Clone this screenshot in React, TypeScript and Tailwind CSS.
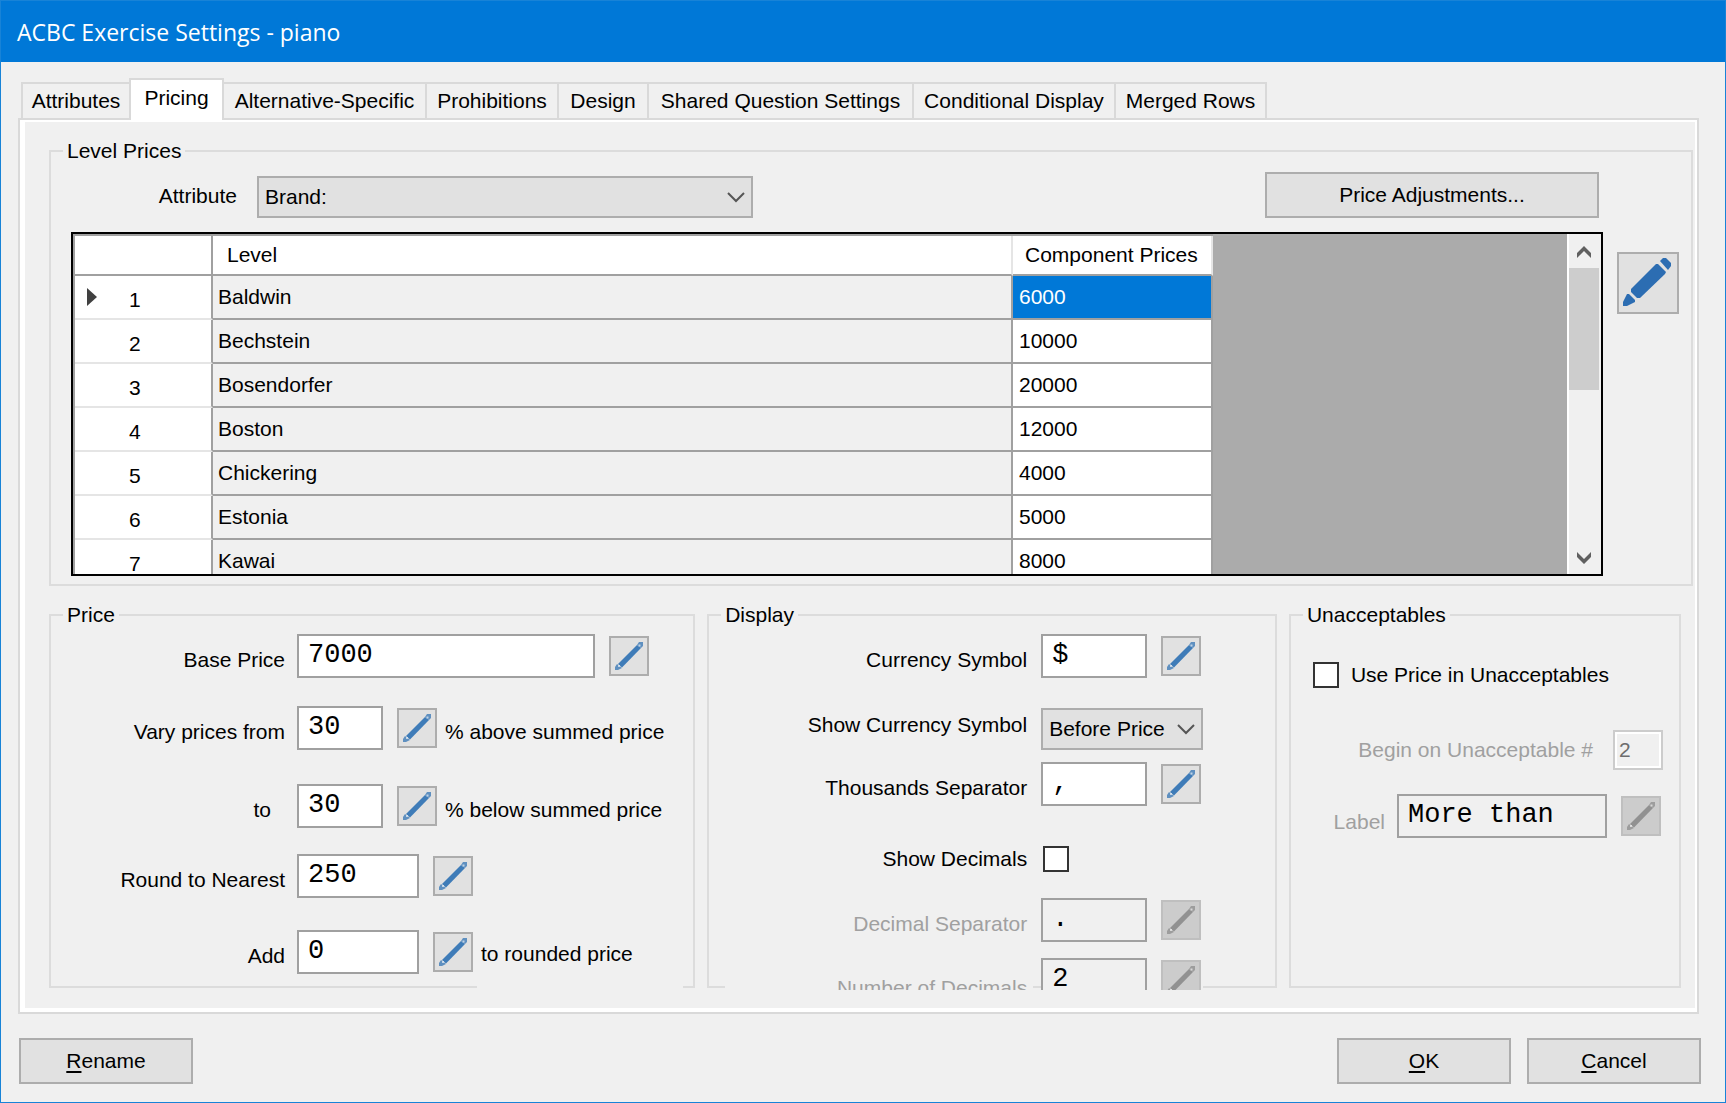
import type { ReactNode } from "react";

const LEVELS = [
  { name: "Baldwin", price: "6000" },
  { name: "Bechstein", price: "10000" },
  { name: "Bosendorfer", price: "20000" },
  { name: "Boston", price: "12000" },
  { name: "Chickering", price: "4000" },
  { name: "Estonia", price: "5000" },
  { name: "Kawai", price: "8000" },
];

const TABS = [
  { label: "Attributes", width: "w-[108px]" },
  { label: "Pricing", width: "w-[95px]" },
  { label: "Alternative-Specific", width: "w-[201px]" },
  { label: "Prohibitions", width: "w-[132px]" },
  { label: "Design", width: "w-[90px]" },
  { label: "Shared Question Settings", width: "w-[265px]" },
  { label: "Conditional Display", width: "w-[202px]" },
  { label: "Merged Rows", width: "w-[153px]" },
];

function PencilButton({ label, disabled = false, className = "" }: { label: string; disabled?: boolean; className?: string }) {
  return (
    <button
      type="button"
      aria-label={label}
      disabled={disabled}
      className={`size-10 shrink-0 border-2 ${
        disabled ? "border-[#bfbfbf] bg-[#cccccc] text-[#919191]" : "border-[#adadad] bg-[#e1e1e1] text-[#3f7cb8]"
      } ${className}`}
    >
      <svg viewBox="2 2 36 36" className="size-9" aria-hidden="true">
        <path d="M9 28 L28 9 L32 12 L13 31.500 Z" fill="currentColor" />
        <path d="M8 28 L13 32 L9 34 L6 34 L6 31 Z" fill="currentColor" opacity="0.8" />
        <path d="M28 9 L30 6 L34 6 L34 10 L32 12 Z" fill="currentColor" opacity="0.8" />
        <path d="M9 29 h2 v2 h-2 Z M29.500 8.500 h2 v2 h-2 Z" fill="#ffffff" opacity="0.6" />
      </svg>
    </button>
  );
}

function Chevron() {
  return (
    <svg viewBox="0 0 18 12" className="pointer-events-none absolute top-1/2 right-2 h-3 w-[18px] -translate-y-1/2" aria-hidden="true">
      <path d="M1 2 L9 10 L17 2" fill="none" stroke="#555555" strokeWidth="2" />
    </svg>
  );
}

function Group({ title, className = "", children }: { title: string; className?: string; children: ReactNode }) {
  return (
    <fieldset className={`min-w-0 border-2 border-[#dcdcdc] ${className}`}>
      <legend className="ml-3 px-1 leading-7">{title}</legend>
      {children}
    </fieldset>
  );
}

function MonoInput({ id, value, width, disabled = false }: { id: string; value: string; width: string; disabled?: boolean }) {
  return (
    <input
      id={id}
      defaultValue={value}
      readOnly={disabled}
      className={`h-11 shrink-0 border-2 border-[#a0a0a0] pb-[2px] pl-[9px] font-['Liberation_Mono',monospace] text-[27px] outline-none ${width} ${
        disabled ? "bg-[#f0f0f0]" : "bg-white"
      }`}
    />
  );
}

function PriceRow({ id, label, value, width, after, className = "", labelClass = "" }: {
  id: string;
  label: string;
  value: string;
  width: string;
  after?: ReactNode;
  className?: string;
  labelClass?: string;
}) {
  return (
    <div className={`flex h-11 items-center ${className}`}>
      <label htmlFor={id} className={`mr-3 w-[234px] shrink-0 pt-2 text-right ${labelClass}`}>{label}</label>
      <MonoInput id={id} value={value} width={width} />
      <PencilButton label={`Edit ${label}`} className="ml-[14px]" />
      {after}
    </div>
  );
}

function DisplayRow({ htmlFor, label, className = "", labelClass = "pt-2", children }: {
  htmlFor: string;
  label: string;
  className?: string;
  labelClass?: string;
  children: ReactNode;
}) {
  return (
    <div className={`flex items-center ${className}`}>
      <label htmlFor={htmlFor} className={`mr-[14px] w-[318px] shrink-0 text-right ${labelClass}`}>{label}</label>
      {children}
    </div>
  );
}

const CHECKBOX = "size-[26px] shrink-0 appearance-none border-2 border-[#333333] bg-white";
const PUSH_BUTTON = "h-[46px] border-2 border-[#adadad] bg-[#e1e1e1]";

export default function App() {
  return (
    <div className="flex min-h-screen flex-col border border-[#1883d7] bg-[#f0f0f0] font-['Liberation_Sans',sans-serif] text-[21px] leading-7 whitespace-nowrap text-black">
      <header className="flex h-[61px] items-center bg-[#0078d7] px-4 font-['Open_Sans',sans-serif] text-[23px] text-white">
        <h1>ACBC Exercise Settings - piano</h1>
      </header>

      <main className="flex grow flex-col px-[17px] pt-4">
        <div role="tablist" className="ml-[3px] flex items-end">
          {TABS.map((tab, i) =>
            i === 1 ? (
              <button key={tab.label} type="button" role="tab" aria-selected="true" className={`relative -mb-[2px] h-[42px] border-2 border-b-0 border-[#d9d9d9] bg-white pb-1 ${tab.width}`}>
                {tab.label}
              </button>
            ) : (
              <button
                key={tab.label}
                type="button"
                role="tab"
                aria-selected="false"
                className={`h-9 border-t-2 border-[#d9d9d9] ${i === 2 ? "" : "border-l-2"} ${i === TABS.length - 1 ? "border-r-2" : ""} ${tab.width}`}
              >
                {tab.label}
              </button>
            ),
          )}
        </div>

        <div role="tabpanel" className="mr-[9px] border-2 border-[#d9d9d9] bg-white pt-[2px] pr-[2px] pb-1 pl-[5px]">
          <div className="bg-[#f0f0f0] pt-[15px] pb-5 pl-6">
            <Group title="Level Prices" className="mr-[2px] pb-2">
              <div className="mt-[7px] flex items-end pr-[92px]">
                <label htmlFor="attribute" className="mr-5 w-[186px] pb-2 text-right">Attribute</label>
                <div className="relative w-[496px]">
                  <select id="attribute" className="h-[42px] w-full appearance-none border-2 border-[#adadad] bg-[#e1e1e1] pl-[6px]">
                    <option>Brand:</option>
                  </select>
                  <Chevron />
                </div>
                <button type="button" className={`ml-auto w-[334px] ${PUSH_BUTTON}`}>Price Adjustments...</button>
              </div>

              <div className="mt-[14px] flex items-start pl-5">
                <div className="flex h-[344px] grow overflow-hidden border-2 border-black bg-[#ababab]">
                  <table className="w-[1140px] table-fixed border-separate border-spacing-0 self-start border-t-2 border-l-2 border-[#a0a0a0] text-left">
                    <thead>
                      <tr className="h-10 bg-white">
                        <th className="w-[138px] border-r-2 border-b-2 border-[#a0a0a0] p-0" aria-label="Row" />
                        <th className="w-[800px] border-r-2 border-b-2 border-r-[#e5e5e5] border-b-[#a0a0a0] py-0 pr-0 pl-[14px] font-normal">Level</th>
                        <th className="border-r-2 border-b-2 border-r-[#e5e5e5] border-b-[#a0a0a0] py-0 pr-0 pl-3 font-normal">Component Prices</th>
                      </tr>
                    </thead>
                    <tbody>
                      {LEVELS.map((level, i) => (
                        <tr key={level.name} className="h-11">
                          <th className="border-r-2 border-b-2 border-r-[#a0a0a0] border-b-[#e5e5e5] bg-white p-0 font-normal">
                            <div className="flex items-center">
                              <span className="w-[54px] pl-3">
                                {i === 0 && (
                                  <svg viewBox="0 0 10 18" className="h-[18px] w-[10px]" aria-hidden="true">
                                    <path d="M0 0 L10 9 L0 18 Z" fill="#404040" />
                                  </svg>
                                )}
                              </span>
                              <span className="pt-[6px]">{i + 1}</span>
                            </div>
                          </th>
                          <td className="border-r-2 border-b-2 border-[#a0a0a0] bg-[#f0f0f0] py-0 pr-0 pl-[5px]">{level.name}</td>
                          <td className={`border-r-2 border-b-2 border-[#a0a0a0] py-0 pr-0 pl-[6px] ${i === 0 ? "bg-[#0078d7] text-white" : "bg-white"}`}>{level.price}</td>
                        </tr>
                      ))}
                    </tbody>
                  </table>
                  <div className="ml-auto flex w-[34px] shrink-0 flex-col items-center border-l-2 border-white bg-[#f0f0f0] pr-[2px]" aria-hidden="true">
                    <svg viewBox="0 0 14 12" className="mt-3 mb-[10px] h-3 w-[14px] shrink-0">
                      <path d="M0 12 V7 L7 0 L14 7 V12 L7 5 Z" fill="#606060" />
                    </svg>
                    <div className="h-[122px] w-[30px] bg-[#cdcdcd]" />
                    <svg viewBox="0 0 14 12" className="mt-auto mb-[10px] h-3 w-[14px] shrink-0">
                      <path d="M0 0 V5 L7 12 L14 5 V0 L7 7 Z" fill="#606060" />
                    </svg>
                  </div>
                </div>
                <button type="button" aria-label="Edit level prices" className="mt-5 mr-3 ml-[14px] size-[62px] shrink-0 border-2 border-[#adadad] bg-[#e1e1e1]">
                  <svg viewBox="2 2 58 58" className="size-[58px]" fill="#2c6db2" aria-hidden="true">
                    <path d="M14 37 L39 12 L41 12 L49 20 L48 22 L23 46 L20 46 L14 40 Z" />
                    <path d="M10 42 L12 42 L18 48 L18 50 L10 54 L6 54 L6 50 Z" />
                    <path d="M43 9 L46 6 L49 6 L54 11 L54 14 L51 18 Z" />
                  </svg>
                </button>
              </div>
            </Group>

            <div className="mt-[15px] mr-[14px] flex gap-3">
              <Group title="Price" className="flex-[647_0_0]">
                <PriceRow id="base" label="Base Price" value="7000" width="w-[298px]" className="mt-[5px]" />
                <PriceRow id="above" label="Vary prices from" value="30" width="w-[86px]" className="mt-7" after={<span className="ml-2 pt-2">% above summed price</span>} />
                <PriceRow id="below" label="to" value="30" width="w-[86px]" className="mt-[34px]" labelClass="pr-[14px]" after={<span className="ml-2 pt-2">% below summed price</span>} />
                <PriceRow id="round" label="Round to Nearest" value="250" width="w-[122px]" className="mt-[26px]" />
                <PriceRow
                  id="add"
                  label="Add"
                  value="0"
                  width="w-[122px]"
                  className="mt-8"
                  after={<span className="-mb-[14px] ml-1 h-12 w-[206px] self-end bg-[#f0f0f0] pl-1">to rounded price</span>}
                />
              </Group>

              <Group title="Display" className="flex-[570_0_0]">
                <DisplayRow htmlFor="currency" label="Currency Symbol" className="mt-[5px]">
                  <MonoInput id="currency" value="$" width="w-[106px]" />
                  <PencilButton label="Edit currency symbol" className="ml-[14px]" />
                </DisplayRow>
                <DisplayRow htmlFor="show-currency" label="Show Currency Symbol" className="mt-[30px]" labelClass="pb-2">
                  <div className="relative w-[162px]">
                    <select id="show-currency" className="h-[42px] w-full appearance-none border-2 border-[#adadad] bg-[#e1e1e1] pl-[6px]">
                      <option>Before Price</option>
                    </select>
                    <Chevron />
                  </div>
                </DisplayRow>
                <DisplayRow htmlFor="thousands" label="Thousands Separator" className="mt-3">
                  <MonoInput id="thousands" value="," width="w-[106px]" />
                  <PencilButton label="Edit thousands separator" className="ml-[14px]" />
                </DisplayRow>
                <DisplayRow htmlFor="show-decimals" label="Show Decimals" className="mt-[39px]" labelClass="">
                  <input id="show-decimals" type="checkbox" className={`ml-[2px] ${CHECKBOX}`} />
                </DisplayRow>
                <DisplayRow htmlFor="decimal" label="Decimal Separator" className="mt-[25px]" labelClass="pt-2 text-[#a0a0a0]">
                  <MonoInput id="decimal" value="." width="w-[106px]" disabled />
                  <PencilButton label="Edit decimal separator" disabled className="ml-[14px]" />
                </DisplayRow>
                {/* The last row runs past the visible area and is cut off at the group's lower edge. */}
                <div className="mt-4 -mb-1 ml-4 flex h-8 items-start overflow-hidden">
                  <label htmlFor="decimals" className="mr-2 h-8 w-[308px] shrink-0 bg-[#f0f0f0] pt-4 pr-[6px] text-right text-[#a0a0a0]">Number of Decimals</label>
                  <MonoInput id="decimals" value="2" width="w-[106px]" disabled />
                  <div className="h-11 bg-[#f0f0f0] pt-[2px] pr-[2px] pl-[14px]">
                    <PencilButton label="Edit number of decimals" disabled />
                  </div>
                </div>
              </Group>

              <Group title="Unacceptables" className="flex-[391_0_0]">
                <div className="mt-8 ml-[22px] flex items-center">
                  <input id="use-price" type="checkbox" className={CHECKBOX} />
                  <label htmlFor="use-price" className="ml-3">Use Price in Unacceptables</label>
                </div>
                <div className="mt-[41px] mr-4 flex items-center justify-end text-[#a0a0a0]">
                  <label htmlFor="begin" className="mr-5">Begin on Unacceptable #</label>
                  <input id="begin" disabled defaultValue="2" className="h-10 w-[50px] border-2 border-[#cccccc] bg-[#f0f0f0] pl-1 text-[#6d6d6d] ring-2 ring-white ring-inset" />
                </div>
                <div className="mt-6 mr-[18px] flex items-center justify-end">
                  <label htmlFor="label" className="mr-3 pt-3 text-[#a0a0a0]">Label</label>
                  <MonoInput id="label" value="More than" width="w-[210px]" disabled />
                  <PencilButton label="Edit label" disabled className="ml-[14px]" />
                </div>
              </Group>
            </div>
          </div>
        </div>

        <footer className="mt-6 mr-[7px] mb-[18px] ml-[1px] flex items-center gap-4">
          <button type="button" className={`mr-auto w-[174px] ${PUSH_BUTTON}`}>
            <span className="underline decoration-2 underline-offset-3">R</span>ename
          </button>
          <button type="button" className={`w-[174px] ${PUSH_BUTTON}`}>
            <span className="underline decoration-2 underline-offset-3">O</span>K
          </button>
          <button type="button" className={`w-[174px] ${PUSH_BUTTON}`}>
            <span className="underline decoration-2 underline-offset-3">C</span>ancel
          </button>
        </footer>
      </main>
    </div>
  );
}
